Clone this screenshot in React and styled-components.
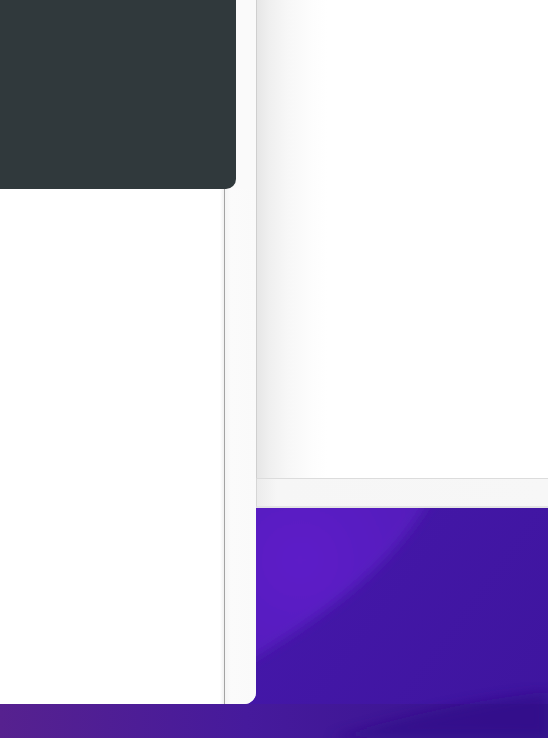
import React from "react";
import styled, { createGlobalStyle } from "styled-components";

const GlobalStyle = createGlobalStyle`
  html, body {
    margin: 0;
    padding: 0;
    overflow: hidden;
  }
  body {
    font-family: "Inter", "Noto Sans", sans-serif;
    background: #4416a8;
  }
`;

const Desktop = styled.div`
  position: relative;
  width: 548px;
  height: 738px;
  overflow: hidden;
`;

const Wallpaper = styled.svg`
  position: absolute;
  inset: 0;
  width: 100%;
  height: 100%;
`;

const Windows = styled.div`
  position: relative;
  display: flex;
  align-items: flex-start;
  width: 100%;
`;

const FrontWindow = styled.div`
  display: grid;
  grid-template-columns: 224px 1px 1fr;
  grid-template-rows: 189px 1fr;
  width: 256px;
  height: 704px;
  flex-shrink: 0;
  background: #fafafa;
  border-bottom-right-radius: 12px;
  overflow: hidden;
`;

const HeaderPanel = styled.div`
  grid-column: 1 / 4;
  grid-row: 1;
  width: 236px;
  background: #30393c;
  border-bottom-right-radius: 10px;
`;

const Content = styled.div`
  grid-column: 1;
  grid-row: 2;
  background: linear-gradient(to right, #ffffff 0, #ffffff 220px, #f0f0f0 224px);
`;

const Divider = styled.div`
  grid-column: 2;
  grid-row: 2;
  background: #a3a3a3;
`;

const SideStrip = styled.div`
  grid-column: 3;
  grid-row: 2;
  background: linear-gradient(to right, #f4f4f4, #fbfbfb 6px, #fafafa);
`;

const BackWindow = styled.div`
  display: flex;
  flex-direction: column;
  flex: 1;
  height: 508px;
`;

const BackBody = styled.div`
  flex: 1;
  border-left: 1px solid #cfcfcf;
  background: linear-gradient(
    to right,
    #e6e6e6 0,
    #efefef 12px,
    #f7f7f7 30px,
    #fdfdfd 55px,
    #ffffff 70px
  );
  border-bottom: 1px solid #dcdcdc;
`;

const StatusBar = styled.div`
  height: 27px;
  border-left: 1px solid #d6d6d6;
  background: linear-gradient(to right, #ececec, #f6f6f6 20px, #f7f7f7);
  border-bottom: 2px solid #e4e4e4;
`;

export default function App() {
  return (
    <>
      <GlobalStyle />
      <Desktop>
        <Wallpaper viewBox="0 0 548 738" preserveAspectRatio="none">
          <defs>
            <linearGradient id="base" x1="0" y1="0" x2="1" y2="1">
              <stop offset="0" stopColor="#5319bb" />
              <stop offset="0.6" stopColor="#4517aa" />
              <stop offset="1" stopColor="#3e159e" />
            </linearGradient>
            <radialGradient id="light" cx="300" cy="560" r="170" gradientUnits="userSpaceOnUse">
              <stop offset="0" stopColor="#5d1fc8" />
              <stop offset="1" stopColor="#521bb8" />
            </radialGradient>
            <linearGradient id="low" x1="0" y1="0" x2="1" y2="0">
              <stop offset="0" stopColor="#56218f" />
              <stop offset="0.45" stopColor="#461a9c" />
              <stop offset="1" stopColor="#36128e" />
            </linearGradient>
            <filter id="soft" x="-20%" y="-20%" width="140%" height="140%">
              <feGaussianBlur stdDeviation="6" />
            </filter>
          </defs>
          <rect x="0" y="0" width="548" height="738" fill="url(#base)" />
          <path
            d="M200 470 L445 470 C405 560 330 615 200 690 Z"
            fill="url(#light)"
            filter="url(#soft)"
          />
          <path d="M0 704 L548 704 L548 738 L0 738 Z" fill="url(#low)" />
          <path
            d="M330 738 C420 712 490 698 548 692 L548 738 Z"
            fill="#33118a"
            opacity="0.75"
            filter="url(#soft)"
          />
        </Wallpaper>
        <Windows>
          <FrontWindow>
            <HeaderPanel />
            <Content />
            <Divider />
            <SideStrip />
          </FrontWindow>
          <BackWindow>
            <BackBody />
            <StatusBar />
          </BackWindow>
        </Windows>
      </Desktop>
    </>
  );
}
